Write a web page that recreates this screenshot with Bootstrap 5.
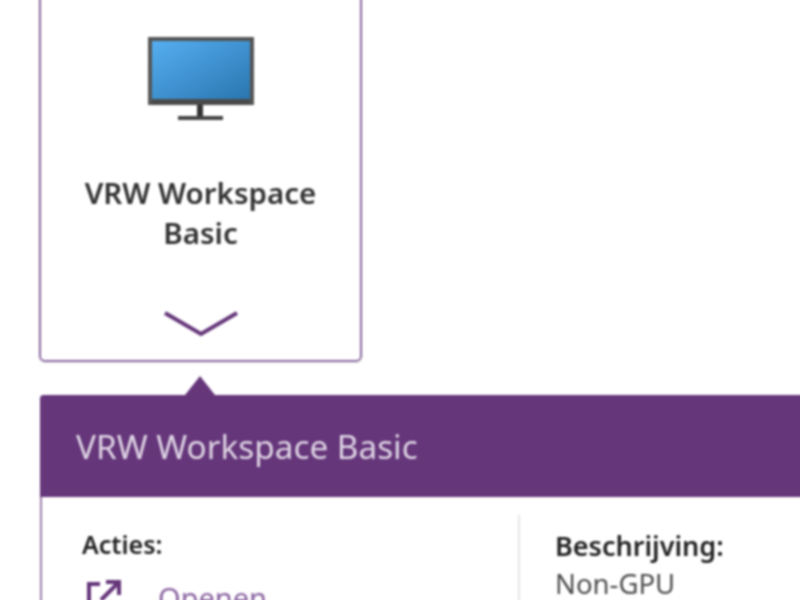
<!DOCTYPE html>
<html lang="en">
<head>
    <meta charset="UTF-8">
    <meta name="viewport" content="width=device-width, initial-scale=1.0">
    <title>VRW Workspace Basic</title>
    <link href="https://cdn.jsdelivr.net/npm/bootstrap@5.3.3/dist/css/bootstrap.min.css" rel="stylesheet">
    <script src="https://cdn.jsdelivr.net/npm/bootstrap@5.3.3/dist/js/bootstrap.bundle.min.js"></script>
    <style>
        html, body { height: 600px; overflow: hidden; background: #fff; }
        body { font-family: "Noto Sans", "Open Sans", sans-serif; color: #444; }
        .app-page { width: 830px; height: 630px; margin-top: -10px; overflow: hidden; padding: 10px 0 0 39px; filter: blur(.9px); }
        .app-tile { width: 323px; height: 382px; margin-top: -20px; padding-top: 54px; border: 2px solid #8a68a0; border-radius: 6px; box-shadow: 0 1px 3px rgba(0,0,0,.08); }
        .app-name { margin-top: 49px; font-size: 29.5px; line-height: 40px; font-weight: 600; color: #333; }
        .tile-chevron { margin-top: 57px; }
        .app-arrow { width: 30px; height: 19px; margin: 14px 0 0 146px; background: #65367a; clip-path: polygon(50% 0, 100% 100%, 0 100%); }
        .app-panel { width: 800px; margin-left: 1px; border-left: 2px solid #9c7fae; border-top-left-radius: 4px; }
        .panel-head { height: 102px; margin-left: -2px; padding: 2px 0 0 36px; font-size: 33.3px; color: #dfd5e5; background: #65367a; border-top-left-radius: 4px; }
        .panel-col-left { width: 476px; padding: 30px 0 0 40px; }
        .panel-col-right { padding: 14px 0 0 35px; border-left: 2px solid #e6e6e6; margin-top: 18px; height: 90px; }
        .panel-label { font-size: 25px; line-height: 34px; font-weight: 600; color: #222; }
        .panel-label-wide { font-size: 27px; }
        .panel-text { margin-top: 2px; font-size: 27.5px; line-height: 38px; color: #4c4c4c; }
        .action-row { margin: 19px 0 0 5px; gap: 37px; }
        .action-link { color: #8a63a0; font-size: 29px; line-height: 36px; text-decoration: none; }
    </style>
</head>
<body>
    <div class="app-page">
        <div class="app-tile text-center">
            <svg width="108" height="88" viewBox="0 0 108 88" class="d-block mx-auto">
                <defs>
                    <linearGradient id="screenFill" x1="0" y1="0" x2="1" y2="1">
                        <stop offset="0" stop-color="#55aef0"/>
                        <stop offset="1" stop-color="#2a76b0"/>
                    </linearGradient>
                </defs>
                <rect x="1" y="1" width="106" height="68" fill="#555"/>
                <rect x="5" y="5" width="98" height="58" fill="url(#screenFill)"/>
                <rect x="5" y="63" width="98" height="6" fill="#4a4a4a"/>
                <rect x="50" y="69" width="6" height="12" fill="#333"/>
                <rect x="31" y="80" width="45" height="4" fill="#444"/>
            </svg>
            <div class="app-name">VRW Workspace<br>Basic</div>
            <svg width="76" height="28" viewBox="0 0 76 28" class="tile-chevron d-block mx-auto">
                <path d="M2 3 L38 24 L74 3" fill="none" stroke="#65367a" stroke-width="4"/>
            </svg>
        </div>
        <div class="app-arrow"></div>
        <div class="app-panel">
            <div class="panel-head d-flex align-items-center">VRW Workspace Basic</div>
            <div class="d-flex">
                <div class="panel-col-left">
                    <div class="panel-label">Acties:</div>
                    <div class="action-row d-flex align-items-start">
                        <svg width="34" height="36" viewBox="0 0 34 36">
                            <path d="M13 4 H2 V33 H31 V22 M19 2 H32 V15 M32 2 L14 20" fill="none" stroke="#65367a" stroke-width="4"/>
                        </svg>
                        <a href="#" class="action-link">Openen</a>
                    </div>
                </div>
                <div class="panel-col-right">
                    <div class="panel-label panel-label-wide">Beschrijving:</div>
                    <div class="panel-text">Non-GPU</div>
                </div>
            </div>
        </div>
    </div>
</body>
</html>
